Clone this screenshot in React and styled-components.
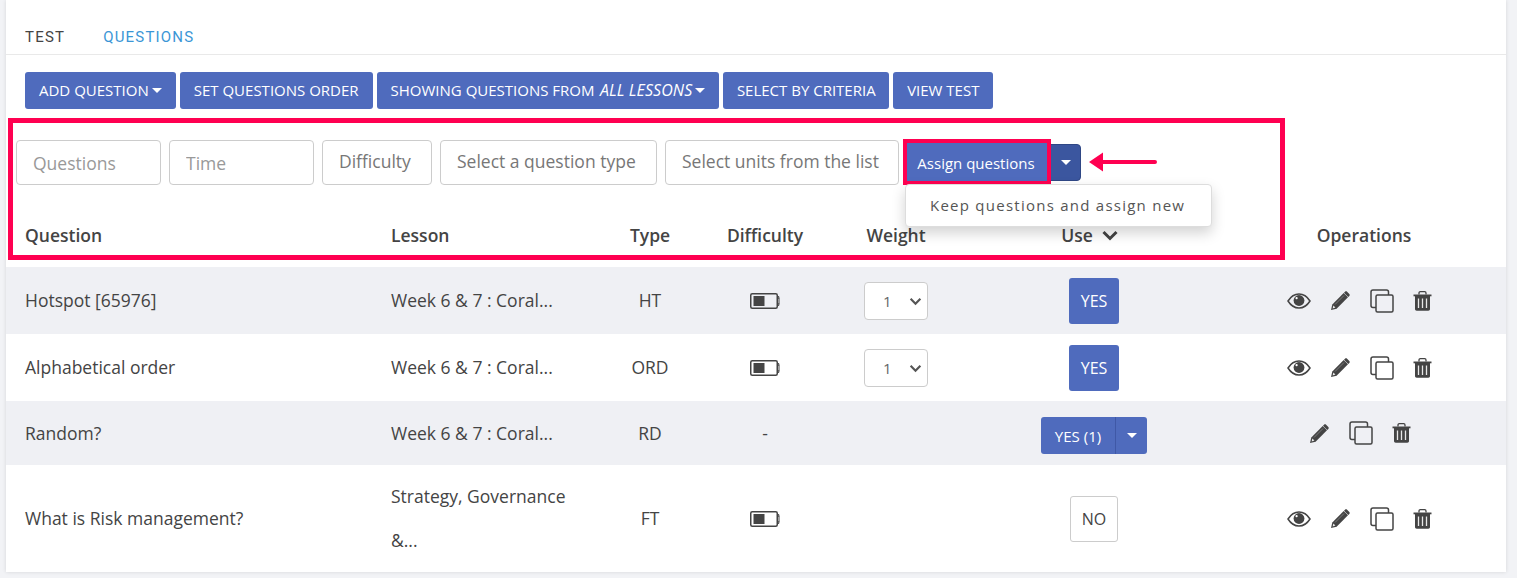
import styled, { createGlobalStyle } from "styled-components";

const GlobalStyle = createGlobalStyle`
  * { box-sizing: border-box; }
  body {
    margin: 0;
    background: #f2f3f6;
    font-family: "Open Sans", "Liberation Sans", sans-serif;
    color: #444;
  }
`;

const Page = styled.div`
  height: 578px;
  padding-left: 6px;
  overflow: hidden;
`;

const Card = styled.div`
  position: relative;
  width: 1500px;
  background: #fff;
  box-shadow: 0 0 4px rgba(0, 0, 0, 0.12);
`;

const Tabs = styled.div`
  height: 55px;
  padding: 28px 0 0 19px;
  display: flex;
  gap: 38px;
  border-bottom: 1px solid #e9e9e9;
`;

const Tab = styled.div`
  font-family: Roboto, sans-serif;
  font-size: 15px;
  line-height: 18px;
  letter-spacing: 1.2px;
  color: ${props => (props.$active ? "#3b96d6" : "#444")};
`;

const Toolbar = styled.div`
  display: flex;
  gap: 4px;
  padding: 17px 0 0 19px;
`;

const Btn = styled.div`
  height: 37px;
  padding: 0 ${props => props.$pad || 14}px 2px;
  display: flex;
  align-items: center;
  background: #4f6bbd;
  color: #fff;
  border-radius: 3px;
  font-size: 15px;
  white-space: pre;
  em { font-style: italic; font-size: 16px; letter-spacing: 0.1px; margin-left: 1.5px; }
`;

const Caret = styled.span`
  display: inline-block;
  margin: 2px 0 0 3px;
  border-top: 5px solid #fff;
  border-left: 5px solid transparent;
  border-right: 5px solid transparent;
`;

const Filters = styled.div`
  display: flex;
  align-items: flex-start;
  gap: 8px;
  padding: 31px 0 0 10px;
`;

const FilterInput = styled.input`
  width: ${props => props.$w}px;
  height: 45px;
  padding: 0 16px;
  border: 1px solid #ccc;
  border-radius: 4px;
  background: #fff;
  font: 17.5px "Open Sans", sans-serif;
  &::placeholder { color: #999; opacity: 1; }
`;

const FilterSelect = styled.div`
  width: ${props => props.$w}px;
  height: 45px;
  padding: 0 16px 4px;
  display: flex;
  align-items: center;
  border: 1px solid #ccc;
  border-radius: 4px;
  font-size: 17.5px;
  color: #777;
  white-space: nowrap;
`;

const AssignGroup = styled.div`
  position: relative;
  display: flex;
  margin-top: 3px;
`;

const AssignBtn = styled.div`
  position: relative;
  z-index: 1;
  width: 140px;
  height: 38px;
  padding: 2px 2px 0 0;
  display: flex;
  align-items: center;
  justify-content: center;
  background: #4f6bbd;
  color: #fff;
  font-size: 15px;
  outline: 4px solid #ff0051;
`;

const AssignCaret = styled.div`
  width: 34px;
  height: 37px;
  margin-top: 1px;
  display: flex;
  align-items: center;
  justify-content: center;
  background: #3b569f;
  border: 1px solid #2f4785;
  border-radius: 0 4px 4px 0;
  span { margin: 0 0 0 4px; }
`;

const Menu = styled.div`
  position: absolute;
  left: -2px;
  top: 41px;
  width: 307px;
  height: 43px;
  padding: 0 0 2px 24px;
  display: flex;
  align-items: center;
  background: #fff;
  border: 1px solid #ddd;
  border-radius: 4px;
  box-shadow: 0 6px 14px rgba(0, 0, 0, 0.18);
  font-size: 15px;
  letter-spacing: 1.25px;
  color: #555;
  white-space: nowrap;
  z-index: 3;
`;

const Arrow = styled.svg`
  position: absolute;
  left: 182px;
  top: 9px;
`;

const Highlight = styled.div`
  position: absolute;
  left: 2px;
  top: 118px;
  width: 1277px;
  height: 142px;
  border: 5px solid #ff0051;
  pointer-events: none;
  z-index: 2;
`;

const columns = "366px 224px 108px 122px 140px 256px 284px";

const HeadRow = styled.div`
  display: grid;
  grid-template-columns: ${columns};
  align-items: center;
  height: 82px;
  padding-top: 18px;
  font-size: 17.5px;
  font-weight: 600;
  color: #444;
`;

const Row = styled.div`
  display: grid;
  grid-template-columns: ${columns};
  align-items: center;
  height: ${props => props.$h}px;
  background: ${props => (props.$shade ? "#eff0f4" : "#fff")};
  font-size: 17.5px;
  color: #444;
`;

const Cell = styled.div`
  display: flex;
  align-items: center;
  justify-content: center;
  white-space: nowrap;
`;

const TextCell = styled(Cell)`
  justify-content: ${props => (props.$left ? "flex-start" : "center")};
  padding: 0 0 1px ${props => (props.$left ? "19px" : "0")};
`;

const HeadCell = styled(Cell)`
  justify-content: ${props => (props.$left ? "flex-start" : "center")};
  padding-left: ${props => (props.$left ? "19px" : "0")};
`;

const UseHeadCell = styled(Cell)`
  padding-right: 9px;
`;

const OpsCell = styled(Cell)`
  gap: 19px;
  padding-right: ${props => (props.$compact ? "8px" : "9px")};
`;

const LessonText = styled.div`
  line-height: 44px;
  width: 190px;
  white-space: normal;
`;

const SortIcon = styled.svg`
  margin-left: 9px;
`;

const WeightBox = styled.div`
  position: relative;
  width: 64px;
  height: 38px;
  padding-left: 18px;
  display: flex;
  align-items: center;
  background: #fff;
  border: 1px solid #ccc;
  border-radius: 4px;
  font-size: 15px;
  color: #666;
  svg { position: absolute; right: 5px; top: 14px; }
`;

const UseYes = styled.div`
  width: 50px;
  height: 46px;
  display: flex;
  align-items: center;
  justify-content: center;
  background: #4f6bbd;
  border-radius: 3px;
  color: #fff;
  font-size: 16px;
`;

const UseNo = styled(UseYes)`
  width: 48px;
  background: #fff;
  border: 1px solid #ccc;
  color: #444;
`;

const SplitGroup = styled.div`
  display: flex;
  height: 37px;
  margin-top: 5px;
  border-radius: 3px;
  overflow: hidden;
  background: #4f6bbd;
  color: #fff;
  font-size: 15px;
`;

const SplitLabel = styled.div`
  width: 75px;
  display: flex;
  align-items: center;
  justify-content: center;
  border-right: 1px solid #3f58a6;
`;

const SplitCaret = styled.div`
  width: 31px;
  display: flex;
  align-items: center;
  justify-content: center;
  span { margin: 0; }
`;

const Eye = () => (
  <svg width="24" height="16" viewBox="0 0 24 16">
    <path d="M1 8C4 3.200 7.800 1 12 1s8 2.200 11 7c-3 4.800-6.800 7-11 7S4 12.800 1 8z" fill="none" stroke="#444" strokeWidth="1.500" />
    <circle cx="12" cy="7.500" r="5.400" fill="#444" />
    <circle cx="9.600" cy="5.200" r="1.100" fill="#fff" />
  </svg>
);

const Pencil = () => (
  <svg width="21" height="21" viewBox="0 0 21 21">
    <path d="M1 20l1.300-5.600L13.700 3l4.300 4.300L6.600 18.700z" fill="#444" />
    <path d="M15 1.700c.6-.6 1.500-.6 2.100 0l2.200 2.200c.6.6.6 1.500 0 2.100L18.300 7 14 2.700z" fill="#444" />
    <path d="M3.400 15.600l2 2-2.800.8z" fill="#eee" />
    <path d="M5 14.500l9-9" stroke="#888" strokeWidth=".8" />
  </svg>
);

const Copy = () => (
  <svg width="24" height="24" viewBox="0 0 24 24" fill="none" stroke="#444" strokeWidth="1.500">
    <path d="M6 18.500H3C1.800 18.500 1 17.700 1 16.500V3C1 1.800 1.800 1 3 1h13.500c1.200 0 2 .8 2 2v3" />
    <rect x="6" y="6" width="17" height="17" rx="1.500" />
  </svg>
);

const Trash = () => (
  <svg width="19" height="20" viewBox="0 0 19 20">
    <path d="M.5 3.500h18v1.800H.5z" fill="#444" />
    <path d="M6 3.500V2c0-.8.6-1.300 1.300-1.300h4.400c.7 0 1.300.5 1.300 1.300v1.500" fill="none" stroke="#444" strokeWidth="1.300" />
    <path d="M2 5h15v13c0 1-.7 1.700-1.700 1.700H3.700C2.700 19.700 2 19 2 18z" fill="#444" />
    <path d="M5.500 7.500v9.500M9.500 7.500v9.500M13.500 7.500v9.500" stroke="#e8e8e8" strokeWidth="1.300" />
  </svg>
);

const Battery = () => (
  <svg width="30" height="16" viewBox="0 0 30 16">
    <rect x=".75" y=".75" width="26.500" height="14.500" rx="1.500" fill="none" stroke="#444" strokeWidth="1.500" />
    <rect x="3.500" y="3" width="11" height="10" fill="#444" />
    <path d="M27 3.500h1c.5 0 .8.3.8.8v1.700M28.800 10v1.700c0 .5-.3.8-.8.8h-1" fill="none" stroke="#444" strokeWidth="1.200" />
    <path d="M29 5.500v5" stroke="#444" strokeWidth="1" />
  </svg>
);

const Chevron = ({ width, height, color, stroke }) => (
  <svg width={width} height={height} viewBox="0 0 12 8">
    <path d="M1.500 1.500L6 6l4.500-4.500" fill="none" stroke={color} strokeWidth={stroke} />
  </svg>
);

function Operations({ eye = true }) {
  return (
    <OpsCell $compact={!eye}>
      {eye && <Eye />}
      <Pencil />
      <Copy />
      <Trash />
    </OpsCell>
  );
}

function WeightSelect() {
  return (
    <WeightBox>
      1
      <Chevron width={13} height={9} color="#555" stroke={2} />
    </WeightBox>
  );
}

function App() {
  return (
    <Page>
      <GlobalStyle />
      <Card>
        <Tabs>
          <Tab>TEST</Tab>
          <Tab $active>QUESTIONS</Tab>
        </Tabs>
        <Toolbar>
          <Btn>ADD QUESTION<Caret /></Btn>
          <Btn>SET QUESTIONS ORDER</Btn>
          <Btn>SHOWING QUESTIONS FROM <em>ALL LESSONS</em><Caret /></Btn>
          <Btn $pad={13.5}>SELECT BY CRITERIA</Btn>
          <Btn>VIEW TEST</Btn>
        </Toolbar>
        <Highlight />
        <Filters>
          <FilterInput $w={145} placeholder="Questions" />
          <FilterInput $w={145} placeholder="Time" />
          <FilterSelect $w={110}>Difficulty</FilterSelect>
          <FilterSelect $w={217}>Select a question type</FilterSelect>
          <FilterSelect $w={234}>Select units from the list</FilterSelect>
          <AssignGroup>
            <AssignBtn>Assign questions</AssignBtn>
            <AssignCaret><Caret /></AssignCaret>
            <Arrow width="70" height="20" viewBox="0 0 70 20">
              <path d="M0 10L14 .5V8h52a2 2 0 0 1 0 4H14v7.500z" fill="#ff0051" />
            </Arrow>
            <Menu>Keep questions and assign new</Menu>
          </AssignGroup>
        </Filters>
        <HeadRow>
          <HeadCell $left>Question</HeadCell>
          <HeadCell $left>Lesson</HeadCell>
          <HeadCell>Type</HeadCell>
          <HeadCell>Difficulty</HeadCell>
          <HeadCell>Weight</HeadCell>
          <UseHeadCell>
            Use
            <SortIcon width="16" height="11" viewBox="0 0 16 11">
              <path d="M1.500 2l6.500 6.500L14.500 2" fill="none" stroke="#444" strokeWidth="3" />
            </SortIcon>
          </UseHeadCell>
          <HeadCell>Operations</HeadCell>
        </HeadRow>
        <Row $h={67} $shade>
          <TextCell $left>Hotspot [65976]</TextCell>
          <TextCell $left>Week 6 &amp; 7 : Coral...</TextCell>
          <TextCell>HT</TextCell>
          <Cell><Battery /></Cell>
          <Cell><WeightSelect /></Cell>
          <Cell><UseYes>YES</UseYes></Cell>
          <Operations />
        </Row>
        <Row $h={67}>
          <TextCell $left>Alphabetical order</TextCell>
          <TextCell $left>Week 6 &amp; 7 : Coral...</TextCell>
          <TextCell>ORD</TextCell>
          <Cell><Battery /></Cell>
          <Cell><WeightSelect /></Cell>
          <Cell><UseYes>YES</UseYes></Cell>
          <Operations />
        </Row>
        <Row $h={64} $shade>
          <TextCell $left>Random?</TextCell>
          <TextCell $left>Week 6 &amp; 7 : Coral...</TextCell>
          <TextCell>RD</TextCell>
          <TextCell>-</TextCell>
          <Cell />
          <Cell>
            <SplitGroup>
              <SplitLabel>YES (1)</SplitLabel>
              <SplitCaret><Caret /></SplitCaret>
            </SplitGroup>
          </Cell>
          <Operations eye={false} />
        </Row>
        <Row $h={107}>
          <TextCell $left>What is Risk management?</TextCell>
          <TextCell $left><LessonText>Strategy, Governance &amp;...</LessonText></TextCell>
          <TextCell>FT</TextCell>
          <Cell><Battery /></Cell>
          <Cell />
          <Cell><UseNo>NO</UseNo></Cell>
          <Operations />
        </Row>
      </Card>
    </Page>
  );
}

export default App;
